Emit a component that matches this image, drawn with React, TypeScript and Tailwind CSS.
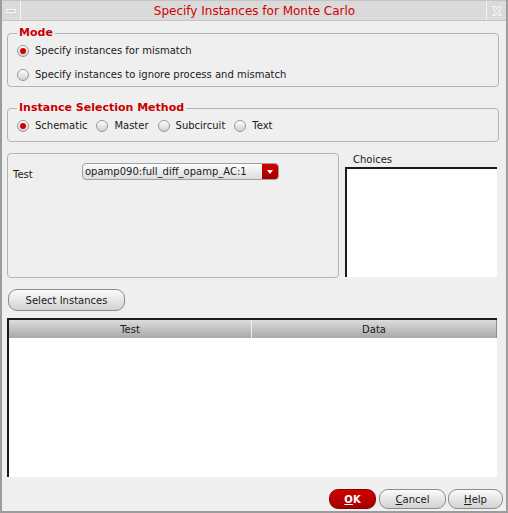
import React from "react";

const font = { fontFamily: '"DejaVu Sans", "Liberation Sans", sans-serif' };

function Radio({ checked, label }: { checked?: boolean; label: string }) {
  return (
    <label className="flex h-[13px] items-center gap-[6px] text-[10px] leading-[13px] text-[#1a1a1a]">
      <span className="flex h-[12px] w-[12px] items-center justify-center rounded-full border border-[#9a9a9a] bg-gradient-to-b from-[#ffffff] to-[#d0d0d0]">
        {checked && <span className="h-[6px] w-[6px] rounded-full bg-[#d40000]" />}
      </span>
      {label}
    </label>
  );
}

function Group({ title, children, className }: { title: string; children: React.ReactNode; className?: string }) {
  return (
    <fieldset className={"rounded-[4px] border border-[#b4b4b4] px-[9px] " + (className ?? "")}>
      <legend className="px-[2px] text-[11px] font-bold leading-[14px] text-[#c80000]">{title}</legend>
      {children}
    </fieldset>
  );
}

function PillButton({ children, className }: { children: React.ReactNode; className?: string }) {
  return (
    <button
      className={
        "flex h-[20px] items-center justify-center rounded-[9px] border border-[#8c8c8c] bg-gradient-to-b from-[#fbfbfb] to-[#d2d2d2] text-[10px] text-[#1a1a1a] " +
        (className ?? "")
      }
    >
      {children}
    </button>
  );
}

export default function App() {
  return (
    <div style={font} className="flex h-[513px] w-[508px] flex-col border-x-2 border-b-2 border-[#9c9c9c] bg-[#efefef]">
      {/* title bar */}
      <div className="flex h-[21px] border-y border-[#c4c4c4] bg-[#dadada]">
        <div className="flex w-[19px] items-center justify-center border-r border-[#f4f4f4]">
          <span className="h-[4px] w-[10px] border border-[#f8f8f8] bg-[#cfcfcf]" />
        </div>
        <div className="flex flex-1 items-center justify-center pl-[2px] text-[12px] text-[#d00000]">
          Specify Instances for Monte Carlo
        </div>
        <div className="flex w-[20px] items-center justify-center border-l border-[#f4f4f4]">
          <svg width="12" height="12" viewBox="0 0 12 12" fill="none" stroke="#f6f6f6" strokeWidth="1">
            <path d="M1.5 1.5 L4.5 1.5 L6 4 L7.5 1.5 L10.5 1.5 L7.5 6 L10.5 10.5 L7.5 10.5 L6 8 L4.5 10.5 L1.5 10.5 L4.5 6 Z" />
          </svg>
        </div>
      </div>

      <div className="flex flex-1 flex-col pl-[5px] pr-[7px]">
        <Group title="Mode" className="mt-[5px] pb-[5px]">
          <div className="flex flex-col gap-[11px] pt-[4px]">
            <Radio checked label="Specify instances for mismatch" />
            <Radio label="Specify instances to ignore process and mismatch" />
          </div>
        </Group>

        <Group title="Instance Selection Method" className="mt-[14px] pb-[9px]">
          <div className="flex gap-[9px] pt-[4px]">
            <Radio checked label="Schematic" />
            <Radio label="Master" />
            <Radio label="Subcircuit" />
            <Radio label="Text" />
          </div>
        </Group>

        <div className="mt-[11px] flex h-[125px] gap-[6px]">
          <div className="flex w-[332px] items-start rounded-[4px] border border-[#b4b4b4] pl-[5px] pt-[9px]">
            <span className="mt-[4px] w-[69px] text-[10px] text-[#1a1a1a]">Test</span>
            <div className="flex h-[17px] w-[197px] items-center overflow-hidden rounded-[4px] border border-[#a0a0a0] bg-gradient-to-b from-[#fdfdfd] to-[#dcdcdc]">
              <span className="flex-1 pl-[2px] text-[10px] text-[#1a1a1a]">opamp090:full_diff_opamp_AC:1</span>
              <span className="flex h-full w-[16px] items-center justify-center bg-gradient-to-b from-[#d40000] to-[#a00000]">
                <span className="h-0 w-0 border-x-[3px] border-t-[4px] border-x-transparent border-t-white" />
              </span>
            </div>
          </div>
          <div className="flex flex-1 flex-col">
            <span className="ml-[8px] mt-[-1px] h-[15px] text-[10px] text-[#1a1a1a]">Choices</span>
            <div className="mb-[1px] mr-[2px] flex-1 border-l-2 border-t-2 border-[#1a1a1a] bg-white" />
          </div>
        </div>

        <PillButton className="ml-[1px] mt-[11px] h-[22px] w-[117px]">Select Instances</PillButton>

        <div className="mt-[7px] flex h-[159px] w-[490px] flex-col border-l-2 border-t-2 border-[#1a1a1a] bg-white">
          <div className="flex h-[18px] bg-gradient-to-b from-[#dcdcdc] to-[#a9a9a9] text-[10px] text-[#1a1a1a]">
            <div className="flex w-[243px] items-center justify-center border-r border-[#f0f0f0]">Test</div>
            <div className="flex flex-1 items-center justify-center border-r border-[#8c8c8c]">Data</div>
          </div>
        </div>

        <div className="-mr-[4px] mt-[12px] flex justify-end">
          <button className="flex h-[20px] w-[47px] items-center justify-center rounded-[9px] border border-[#8a0000] bg-gradient-to-b from-[#d40000] to-[#a30000] text-[10px] font-bold text-white">
            <span className="underline">O</span>K
          </button>
          <PillButton className="ml-[3px] w-[67px]">
            <span className="underline">C</span>ancel
          </PillButton>
          <PillButton className="ml-[2px] w-[55px]">
            <span className="underline">H</span>elp
          </PillButton>
        </div>
      </div>
    </div>
  );
}
